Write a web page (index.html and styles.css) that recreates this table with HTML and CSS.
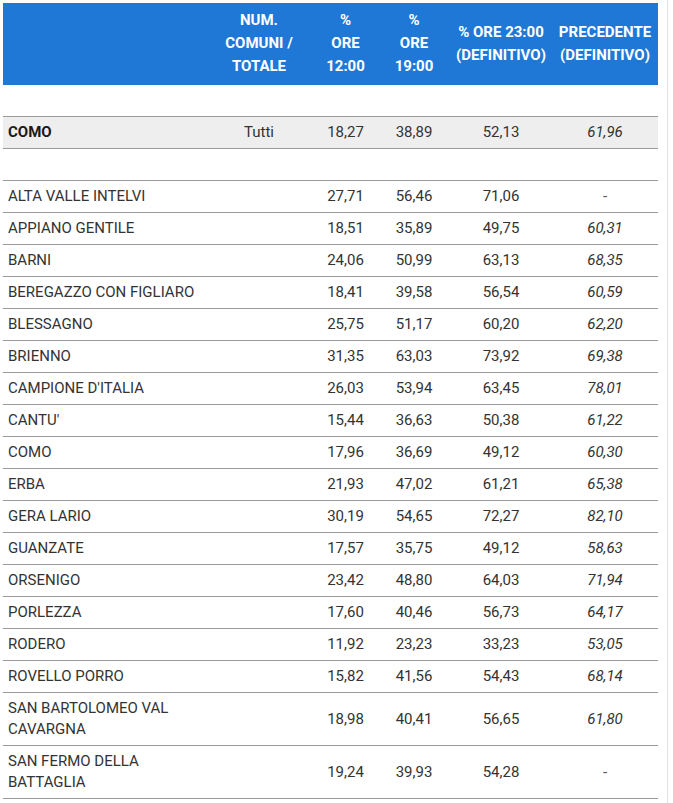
FILE: index.html
```html
<!DOCTYPE html>
<html lang="it">
<head>
<meta charset="utf-8">
<title>Affluenza Como</title>
<link rel="stylesheet" href="styles.css">
</head>
<body>
<div class="frame">
<table class="aff">
  <colgroup>
    <col class="c-name"><col class="c-num"><col class="c-p12"><col class="c-p19"><col class="c-p23"><col class="c-prev">
  </colgroup>
  <thead>
    <tr>
      <th></th>
      <th>NUM.<br>COMUNI /<br>TOTALE</th>
      <th>%<br>ORE<br>12:00</th>
      <th>%<br>ORE<br>19:00</th>
      <th>% ORE 23:00<br>(DEFINITIVO)</th>
      <th>PRECEDENTE<br>(DEFINITIVO)</th>
    </tr>
  </thead>
  <tbody>
    <tr class="blank first"><td colspan="6"></td></tr>
    <tr class="total"><td class="name">COMO</td><td>Tutti</td><td>18,27</td><td>38,89</td><td>52,13</td><td class="prev">61,96</td></tr>
    <tr class="blank"><td colspan="6"></td></tr>
    <tr><td class="name">ALTA VALLE INTELVI</td><td></td><td>27,71</td><td>56,46</td><td>71,06</td><td class="dash">-</td></tr>
    <tr><td class="name">APPIANO GENTILE</td><td></td><td>18,51</td><td>35,89</td><td>49,75</td><td class="prev">60,31</td></tr>
    <tr><td class="name">BARNI</td><td></td><td>24,06</td><td>50,99</td><td>63,13</td><td class="prev">68,35</td></tr>
    <tr><td class="name">BEREGAZZO CON FIGLIARO</td><td></td><td>18,41</td><td>39,58</td><td>56,54</td><td class="prev">60,59</td></tr>
    <tr><td class="name">BLESSAGNO</td><td></td><td>25,75</td><td>51,17</td><td>60,20</td><td class="prev">62,20</td></tr>
    <tr><td class="name">BRIENNO</td><td></td><td>31,35</td><td>63,03</td><td>73,92</td><td class="prev">69,38</td></tr>
    <tr><td class="name">CAMPIONE D'ITALIA</td><td></td><td>26,03</td><td>53,94</td><td>63,45</td><td class="prev">78,01</td></tr>
    <tr><td class="name">CANTU'</td><td></td><td>15,44</td><td>36,63</td><td>50,38</td><td class="prev">61,22</td></tr>
    <tr><td class="name">COMO</td><td></td><td>17,96</td><td>36,69</td><td>49,12</td><td class="prev">60,30</td></tr>
    <tr><td class="name">ERBA</td><td></td><td>21,93</td><td>47,02</td><td>61,21</td><td class="prev">65,38</td></tr>
    <tr><td class="name">GERA LARIO</td><td></td><td>30,19</td><td>54,65</td><td>72,27</td><td class="prev">82,10</td></tr>
    <tr><td class="name">GUANZATE</td><td></td><td>17,57</td><td>35,75</td><td>49,12</td><td class="prev">58,63</td></tr>
    <tr><td class="name">ORSENIGO</td><td></td><td>23,42</td><td>48,80</td><td>64,03</td><td class="prev">71,94</td></tr>
    <tr><td class="name">PORLEZZA</td><td></td><td>17,60</td><td>40,46</td><td>56,73</td><td class="prev">64,17</td></tr>
    <tr><td class="name">RODERO</td><td></td><td>11,92</td><td>23,23</td><td>33,23</td><td class="prev">53,05</td></tr>
    <tr><td class="name">ROVELLO PORRO</td><td></td><td>15,82</td><td>41,56</td><td>54,43</td><td class="prev">68,14</td></tr>
    <tr><td class="name">SAN BARTOLOMEO VAL<br>CAVARGNA</td><td></td><td>18,98</td><td>40,41</td><td>56,65</td><td class="prev">61,80</td></tr>
    <tr><td class="name">SAN FERMO DELLA<br>BATTAGLIA</td><td></td><td>19,24</td><td>39,93</td><td>54,28</td><td class="dash">-</td></tr>
  </tbody>
</table>
</div>
</body>
</html>
```
FILE: styles.css
```css
html, body {
  margin: 0;
  padding: 0;
  background: #ffffff;
}

body {
  font-family: Roboto, "Open Sans", "Liberation Sans", sans-serif;
  color: #333333;
  overflow: hidden;
}

.frame {
  width: 664px;
  min-height: 803px;
  padding: 3px 0 0 3px;
  border-right: 1px solid #e2e2e2;
}

.aff {
  width: 655px;
  table-layout: fixed;
  border-collapse: separate;
  border-spacing: 0;
  font-size: 15px;
}

.c-name { width: 202px; }
.c-num { width: 108px; }
.c-p12 { width: 65px; }
.c-p19 { width: 72px; }
.c-p23 { width: 102px; }
.c-prev { width: 106px; }

.aff thead th {
  background: #1f78d6;
  color: #ffffff;
  font-weight: 700;
  font-size: 15px;
  line-height: 23px;
  padding: 6px 0 7px;
  text-align: center;
  vertical-align: middle;
  white-space: nowrap;
}

.aff tbody td {
  padding: 5px 0;
  line-height: 21px;
  height: 21px;
  border-bottom: 1px solid #9a9a9a;
  text-align: center;
  vertical-align: middle;
  color: #333333;
  white-space: nowrap;
}

.aff tbody td.name {
  text-align: left;
  padding-left: 5px;
}

.aff tbody td.prev {
  font-style: italic;
}

.aff tbody td.dash {
  color: #555555;
}

.aff tbody tr.total td {
  background: #eeeeee;
}

.aff tbody tr.total td.name {
  font-weight: 700;
  color: #1a1a1a;
}
```
